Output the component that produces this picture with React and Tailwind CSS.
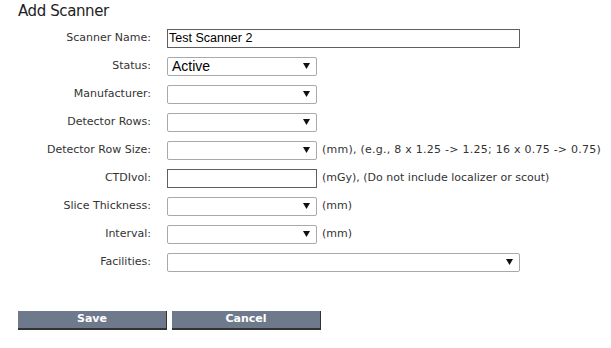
const fieldBase = 'h-[19px] border bg-white'

function Arrow() {
  return (
    <svg className="pointer-events-none absolute right-[6px] top-1/2 -translate-y-1/2" width="7" height="6" viewBox="0 0 7 6">
      <path d="M0 0h7L3.5 6z" fill="#111" />
    </svg>
  )
}

function Select({ value, wide }) {
  return (
    <div
      className={`relative ${fieldBase} rounded-[2px] border-[#a9a9a9] ${wide ? 'w-[353px]' : 'w-[150px]'}`}
    >
      <span className="block pl-[4px] font-['Liberation_Sans',Arial,sans-serif] text-[14px] leading-[17px] text-black">
        {value}
      </span>
      <Arrow />
    </div>
  )
}

function TextInput({ value, wide }) {
  return (
    <div
      className={`${fieldBase} border-[#5f5f5f] ${wide ? 'w-[353px]' : 'w-[150px]'}`}
    >
      <span className="block pl-[1px] font-['Liberation_Sans',Arial,sans-serif] text-[12.5px] leading-[17px] text-black">
        {value}
      </span>
    </div>
  )
}

const rows = [
  { label: 'Scanner Name:', field: <TextInput value="Test Scanner 2" wide /> },
  { label: 'Status:', field: <Select value="Active" /> },
  { label: 'Manufacturer:', field: <Select /> },
  { label: 'Detector Rows:', field: <Select /> },
  { label: 'Detector Row Size:', field: <Select />, note: '(mm), (e.g., 8 x 1.25 -> 1.25; 16 x 0.75 -> 0.75)', spaced: true },
  { label: 'CTDIvol:', field: <TextInput />, note: '(mGy), (Do not include localizer or scout)' },
  { label: 'Slice Thickness:', field: <Select />, note: '(mm)' },
  { label: 'Interval:', field: <Select />, note: '(mm)' },
  { label: 'Facilities:', field: <Select wide /> },
]

export default function App() {
  return (
    <div className="h-[348px] w-[611px] bg-white pl-[18px] font-['DejaVu_Sans',Verdana,sans-serif] text-[11px] text-[#333]">
      <h1 className="pt-[1px] text-[15px] leading-[20px] tracking-[-0.4px] text-[#222]">Add Scanner</h1>

      <div className="mt-[3px] flex flex-col">
        {rows.map((row) => (
          <div key={row.label} className="flex h-[28px] items-center">
            <span className="w-[133px] text-right">{row.label}</span>
            <div className="ml-[16px]">{row.field}</div>
            {row.note ? (
              <span className={`ml-[5px] ${row.spaced ? 'tracking-[0.25px]' : ''}`}>{row.note}</span>
            ) : null}
          </div>
        ))}
      </div>

      <div className="mt-[35px] flex gap-[5px]">
        <button
          type="button"
          className="h-[19px] w-[149px] border-b-2 border-r border-[#333] bg-[#6e7a8c] pb-[1px] text-[11px] font-bold text-white"
        >
          Save
        </button>
        <button
          type="button"
          className="h-[19px] w-[149px] border-b-2 border-r border-[#333] bg-[#6e7a8c] pb-[1px] text-[11px] font-bold text-white"
        >
          Cancel
        </button>
      </div>
    </div>
  )
}
